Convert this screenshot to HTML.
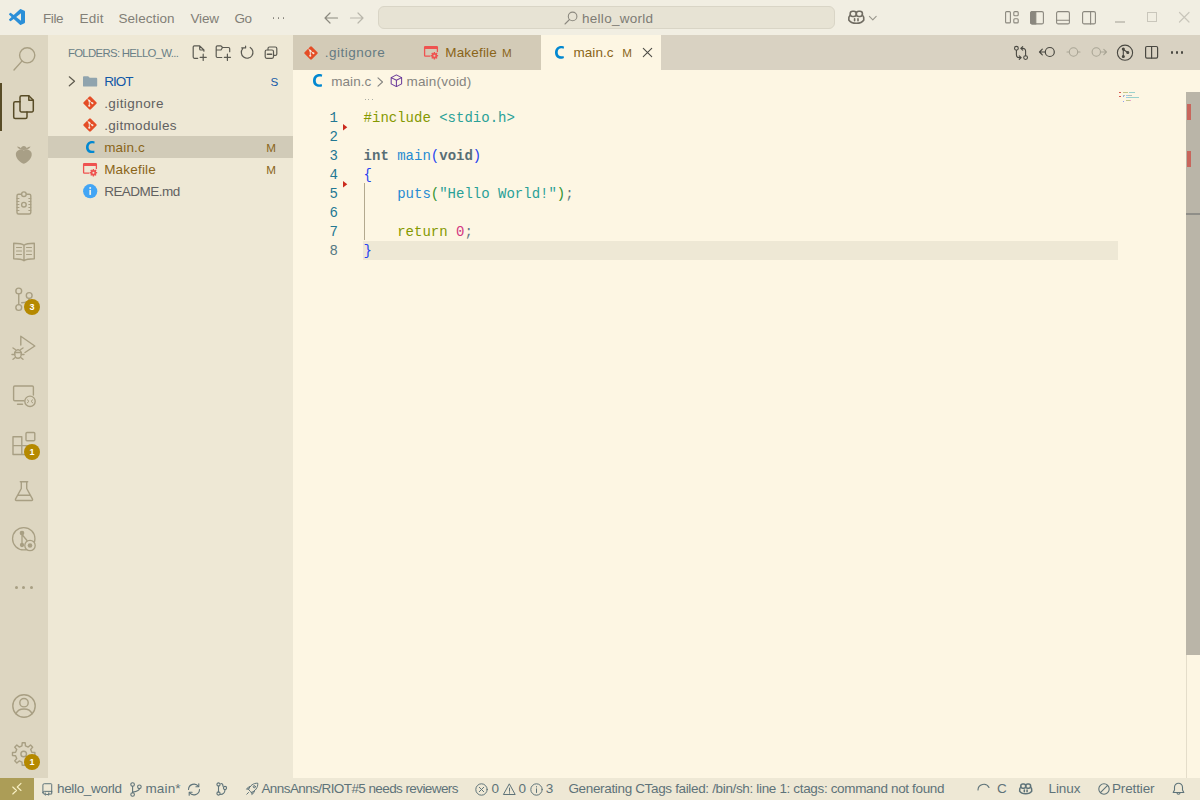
<!DOCTYPE html>
<html>
<head>
<meta charset="utf-8">
<style>
*{box-sizing:border-box;margin:0;padding:0}
html,body{width:1200px;height:800px;overflow:hidden;background:#FDF6E3}
body{font-family:"Liberation Sans",sans-serif;font-size:13px;color:#657B83;position:relative}
.abs{position:absolute}
.t{position:absolute;white-space:pre;line-height:1}
svg{position:absolute;overflow:visible}
.code{position:absolute;left:363.6px;white-space:pre;font-family:"Liberation Mono",monospace;font-size:14px;line-height:19px;height:19px;color:#657B83}
.ln{position:absolute;left:322px;width:16px;text-align:right;font-family:"Liberation Mono",monospace;font-size:14px;line-height:19px;height:19px;color:#237893}
.badge{position:absolute;width:16px;height:16px;border-radius:8px;background:#B58900;color:#fff;font-size:9px;font-weight:700;line-height:16px;text-align:center}
</style>
</head>
<body>
<div class="abs" style="left:0px;top:0px;width:1200px;height:35px;background:#F1EEE2;"></div>
<div class="abs" style="left:0px;top:35px;width:48px;height:743px;background:#DDD6C1;"></div>
<div class="abs" style="left:48px;top:35px;width:245px;height:743px;background:#EEE8D5;"></div>
<div class="abs" style="left:293px;top:35px;width:907px;height:35px;background:#D9D2C2;"></div>
<div class="abs" style="left:293px;top:35px;width:248px;height:35px;background:#D3CBB7;"></div>
<div class="abs" style="left:541px;top:35px;width:120px;height:35px;background:#FDF6E3;"></div>
<div class="abs" style="left:0px;top:778px;width:1200px;height:22px;background:#EEE8D5;"></div>
<div class="abs" style="left:0px;top:778px;width:34px;height:22px;background:#AC9D57;"></div>
<svg style="left:9px;top:9px" width="16" height="16" viewBox="0 0 24 24" fill="#2B8FD8" stroke="none" stroke-width="1" stroke-linecap="round" stroke-linejoin="round" ><path d="M23.15 2.587L18.21.21a1.494 1.494 0 0 0-1.705.29l-9.46 8.63-4.12-3.128a.999.999 0 0 0-1.276.057L.327 7.261A1 1 0 0 0 .326 8.74L3.899 12 .326 15.26a1 1 0 0 0 .001 1.479L1.65 17.94a.999.999 0 0 0 1.276.057l4.12-3.128 9.46 8.63a1.492 1.492 0 0 0 1.704.29l4.942-2.377A1.5 1.5 0 0 0 24 20.06V3.939a1.5 1.5 0 0 0-.85-1.352zm-5.146 14.861L10.826 12l7.178-5.448v10.896z"/></svg>
<div class="abs" style="left:272.7px;top:17.2px;width:1.6px;height:1.6px;background:#827F77;border-radius:1px"></div>
<div class="abs" style="left:277.7px;top:17.2px;width:1.6px;height:1.6px;background:#827F77;border-radius:1px"></div>
<div class="abs" style="left:282.7px;top:17.2px;width:1.6px;height:1.6px;background:#827F77;border-radius:1px"></div>
<svg style="left:324px;top:12px" width="14" height="12" viewBox="0 0 14 12" fill="none" stroke="#8C897F" stroke-width="1.2" stroke-linecap="round" stroke-linejoin="round" ><path d="M13.5 6H1M6 1L1 6l5 5"/></svg>
<svg style="left:350px;top:12px" width="14" height="12" viewBox="0 0 14 12" fill="none" stroke="#B9B6AB" stroke-width="1.2" stroke-linecap="round" stroke-linejoin="round" ><path d="M0.5 6H13M8 1l5 5-5 5"/></svg>
<div class="abs" style="left:378px;top:6px;width:457px;height:23px;background:#E7E3D4;border:1px solid #D9D5C6;border-radius:6px"></div>
<svg style="left:564px;top:10.5px" width="14" height="14" viewBox="0 0 14 14" fill="none" stroke="#8C897F" stroke-width="1.1" stroke-linecap="round" stroke-linejoin="round" ><circle cx="8.6" cy="5.4" r="4.3"/><path d="M5.5 8.5L1 13"/></svg>
<svg style="left:848px;top:10px" width="16.6" height="14.5" viewBox="0 0 16.600 14.500" fill="none" stroke="#716D63" stroke-width="1.6" stroke-linecap="round" stroke-linejoin="round" ><rect x="2.200" y="1.200" width="6.100" height="5.300" rx="2.400"/><rect x="8.300" y="1.200" width="6.100" height="5.300" rx="2.400"/><path d="M2.200 5C0.500 6.500 0.600 8 0.800 10C2 12 5 13.300 8.300 13.300C11.600 13.300 14.600 12 15.800 10C16 8 16.100 6.500 14.400 5"/><path d="M6.600 8.800V10.800M10 8.800V10.800"/></svg>
<svg style="left:868.5px;top:16px" width="8" height="4.5" viewBox="0 0 8 4.500" fill="none" stroke="#9A978D" stroke-width="1.1" stroke-linecap="round" stroke-linejoin="round" ><path d="M0.400 0.400L3.800 3.800L7.200 0.400"/></svg>
<svg style="left:1004.5px;top:11px" width="14" height="12.5" viewBox="0 0 14 12.500" fill="none" stroke="#8A877E" stroke-width="1.1" stroke-linecap="round" stroke-linejoin="round" ><rect x="0.600" y="0.600" width="4.800" height="11.300" rx="1"/><rect x="8.800" y="0.600" width="4.400" height="4.200" rx="1"/><rect x="8.800" y="7.700" width="4.400" height="4.200" rx="1"/></svg>
<svg style="left:1030.2px;top:10.5px" width="14" height="13.5" viewBox="0 0 14 13.500" fill="none" stroke="#8A877E" stroke-width="1.1" stroke-linecap="round" stroke-linejoin="round" ><rect x="0.600" y="0.600" width="12.800" height="12.300" rx="1.500"/><path d="M0.600 2.100a1.500 1.500 0 0 1 1.500-1.500H5.800V12.900H2.100a1.500 1.500 0 0 1-1.500-1.500z" fill="#8A877E"/></svg>
<svg style="left:1056px;top:10.5px" width="14" height="13.5" viewBox="0 0 14 13.500" fill="none" stroke="#8A877E" stroke-width="1.1" stroke-linecap="round" stroke-linejoin="round" ><rect x="0.600" y="0.600" width="12.800" height="12.300" rx="1.500"/><path d="M0.600 9.200H13.400"/></svg>
<svg style="left:1082px;top:10.5px" width="14" height="13.5" viewBox="0 0 14 13.500" fill="none" stroke="#8A877E" stroke-width="1.1" stroke-linecap="round" stroke-linejoin="round" ><rect x="0.600" y="0.600" width="12.800" height="12.300" rx="1.500"/><path d="M8.600 0.600V12.900"/></svg>
<div class="abs" style="left:1114.5px;top:21.4px;width:10.5px;height:1.2px;background:#C9C6BB;"></div>
<div class="abs" style="left:1147px;top:12.2px;width:10px;height:10px;background:transparent;border:1.200px solid #C9C6BB"></div>
<svg style="left:1178.5px;top:12.2px" width="10.5" height="10.5" viewBox="0 0 10.500 10.500" fill="none" stroke="#C9C6BB" stroke-width="1.2" stroke-linecap="round" stroke-linejoin="round" ><path d="M0.500 0.500l9.500 9.500M10 0.500L0.500 10"/></svg>
<div class="abs" style="left:0px;top:83px;width:2px;height:48px;background:#584C27;"></div>
<svg style="left:12px;top:46px" width="24" height="26" viewBox="12 46 24 26" fill="none" stroke="#A89F83" stroke-width="1.4" stroke-linecap="round" stroke-linejoin="round" ><circle cx="27.200" cy="55.300" r="7.600"/><path d="M21.900 61.100L14 70"/></svg>
<svg style="left:12px;top:94px" width="24" height="26" viewBox="12 94 24 26" fill="none" stroke="#584C27" stroke-width="1.5" stroke-linecap="round" stroke-linejoin="round" ><path d="M28.800 95.700H21.500a1.500 1.500 0 0 0-1.500 1.500V110.500a1.500 1.500 0 0 0 1.500 1.500H31.800a1.500 1.500 0 0 0 1.500-1.500V100.200z"/><path d="M28.800 95.700V100.200H33.300"/><path d="M20 101.700H15.200a1.500 1.500 0 0 0-1.500 1.500V117a1.500 1.500 0 0 0 1.500 1.500H25.500a1.500 1.500 0 0 0 1.500-1.500V112"/></svg>
<svg style="left:12px;top:143px" width="24" height="24" viewBox="12 143 24 24" fill="#A89F86" stroke="none" stroke-width="1" stroke-linecap="round" stroke-linejoin="round" ><path d="M23.800 150.500c-1.500-1.200-3-1.300-4.500-.800-2.600.9-4 3.300-3.300 6 .8 3.200 4 7 7.800 8 3.800-1 7-4.800 7.800-8 .7-2.700-.7-5.100-3.300-6-1.500-.5-3-.4-4.500.8z" stroke="none"/><path d="M17 146.500c1 2.200 3.300 3.300 6.800 3.500 3.500-.2 5.800-1.300 6.800-3.500-1.800.2-3 .8-3.800 1.700-.4-1.200-1.400-2-3-2.200-1.600.2-2.600 1-3 2.200-.8-.9-2-1.500-3.800-1.700z" stroke="none"/></svg>
<svg style="left:12px;top:190px" width="24" height="26" viewBox="12 190 24 26" fill="none" stroke="#A89F83" stroke-width="1.4" stroke-linecap="round" stroke-linejoin="round" ><rect x="17" y="194.200" width="13.800" height="19.800" rx="1.500"/><circle cx="23.900" cy="194.200" r="2.300" fill="#DDD6C1"/><circle cx="23.900" cy="204.700" r="2.300"/><path d="M17 198.500h2M17 201.500h2M17 204.500h2M17 207.500h2M17 210.500h2M28.800 198.500h2M28.800 201.500h2M28.800 204.500h2M28.800 207.500h2M28.800 210.500h2" stroke-width="1"/></svg>
<svg style="left:12px;top:240px" width="24" height="22" viewBox="12 240 24 22" fill="none" stroke="#A89F83" stroke-width="1.4" stroke-linecap="round" stroke-linejoin="round" ><path d="M24 245.200c-1.500-1.300-4-2-10.300-2v15.600c6.300 0 8.800.7 10.300 2 1.500-1.300 4-2 10.300-2V243.200c-6.300 0-8.800.7-10.300 2zM24 245.200V260.800"/><path d="M16.500 247.500h5M16.500 251h5M16.500 254.500h5M26.500 247.500h5M26.500 251h5M26.500 254.500h5" stroke-width="1.100"/></svg>
<svg style="left:12px;top:286px" width="24" height="26" viewBox="12 286 24 26" fill="none" stroke="#A89F83" stroke-width="1.4" stroke-linecap="round" stroke-linejoin="round" ><circle cx="18.750" cy="291" r="2.900"/><circle cx="18.750" cy="307.500" r="2.900"/><circle cx="29.200" cy="295.500" r="2.900"/><path d="M18.750 294V304.500M29.200 298.500c0 3-2.500 4.200-7.500 4.200"/></svg>
<div class="badge" style="left:24px;top:299px">3</div>
<svg style="left:10px;top:334px" width="28" height="28" viewBox="10 334 28 28" fill="none" stroke="#A89F83" stroke-width="1.4" stroke-linecap="round" stroke-linejoin="round" ><path d="M20.800 345V336.200L34.800 346 25 352.500"/><ellipse cx="18" cy="354" rx="3.300" ry="4.300"/><path d="M14.700 352.500h6.600M15.300 349.500l-2.300-1.500M20.700 349.500l2.300-1.500M14.700 354.500H12M21.300 354.500H24M15.300 357.500L13 359.300M20.700 357.500L23 359.300"/></svg>
<svg style="left:12px;top:384px" width="26" height="24" viewBox="12 384 26 24" fill="none" stroke="#A89F83" stroke-width="1.4" stroke-linecap="round" stroke-linejoin="round" ><path d="M24 400.800H14.800a1.200 1.200 0 0 1-1.200-1.200V387.200a1.200 1.200 0 0 1 1.200-1.200H32.200a1.200 1.200 0 0 1 1.200 1.200V395"/><path d="M17.500 404.300H22.500"/><circle cx="30" cy="401.300" r="5.200"/><path d="M27.300 399.800l1.700 1.500-1.700 1.500M32.700 399.800L31 401.300l1.700 1.500" stroke-width="1"/></svg>
<svg style="left:12px;top:431px" width="24" height="26" viewBox="12 431 24 26" fill="none" stroke="#A89F83" stroke-width="1.4" stroke-linecap="round" stroke-linejoin="round" ><path d="M13 436.800H21.800V454.500H13zM13 445.600H21.800M21.800 445.600H30.700V454.500H21.800"/><rect x="26" y="432.500" width="8.800" height="8.200" rx="1"/></svg>
<div class="badge" style="left:24px;top:443.700px">1</div>
<svg style="left:12px;top:480px" width="24" height="22" viewBox="12 480 24 22" fill="none" stroke="#A89F83" stroke-width="1.4" stroke-linecap="round" stroke-linejoin="round" ><path d="M20.300 481.700H27.700M21.300 481.700V488.500L15.500 499.200a.9.900 0 0 0 .8 1.300H31.700a.9.900 0 0 0 .8-1.300L26.700 488.500V481.700M18 495.300H30"/></svg>
<svg style="left:12px;top:527px" width="24" height="24" viewBox="12 527 24 24" fill="none" stroke="#A89F83" stroke-width="1.3" stroke-linecap="round" stroke-linejoin="round" ><circle cx="23.750" cy="538.750" r="11.200"/><circle cx="30" cy="545.500" r="5.200" fill="#DDD6C1"/><circle cx="30" cy="545.500" r="2.300" fill="#A89F83" stroke="none"/><circle cx="22" cy="533" r="1.700" fill="#A89F83"/><circle cx="22" cy="545" r="1.500" fill="#A89F83"/><path d="M22 533V545M22 534.500L27 540.500"/></svg>
<div class="abs" style="left:14.85px;top:586.1px;width:2.8px;height:2.8px;background:#A89F83;border-radius:2px"></div>
<div class="abs" style="left:22.35px;top:586.1px;width:2.8px;height:2.8px;background:#A89F83;border-radius:2px"></div>
<div class="abs" style="left:29.85px;top:586.1px;width:2.8px;height:2.8px;background:#A89F83;border-radius:2px"></div>
<svg style="left:12px;top:694px" width="24" height="24" viewBox="12 694 24 24" fill="none" stroke="#A89F83" stroke-width="1.4" stroke-linecap="round" stroke-linejoin="round" ><circle cx="24" cy="706" r="11.200"/><circle cx="24" cy="702.700" r="4.200"/><path d="M16 713.800c1.200-3.300 4-4.800 8-4.800s6.800 1.500 8 4.800"/></svg>
<svg style="left:12px;top:742px" width="24" height="24" viewBox="12 742 24 24" fill="none" stroke="#A89F83" stroke-width="1.4" stroke-linecap="round" stroke-linejoin="round" ><path d="M31.81 752.25L34.90 752.50L34.90 755.50L31.81 755.75L30.67 758.50L32.68 760.86L30.56 762.98L28.20 760.97L25.45 762.11L25.20 765.20L22.20 765.20L21.95 762.11L19.20 760.97L16.84 762.98L14.72 760.86L16.73 758.50L15.59 755.75L12.50 755.50L12.50 752.50L15.59 752.25L16.73 749.50L14.72 747.14L16.84 745.02L19.20 747.03L21.95 745.89L22.20 742.80L25.20 742.80L25.45 745.89L28.20 747.03L30.56 745.02L32.68 747.14L30.67 749.50Z"/><circle cx="23.700" cy="754" r="2.800"/></svg>
<div class="badge" style="left:24px;top:753.800px">1</div>
<svg style="left:192px;top:45px" width="16" height="16" viewBox="192 45 16 16" fill="none" stroke="#5B5A52" stroke-width="1.2" stroke-linecap="round" stroke-linejoin="round" ><path d="M197.700 58.300H194.400a1.200 1.200 0 0 1-1.200-1.200V47a1.200 1.200 0 0 1 1.200-1.200H199.700L203.900 50V51.200M199.700 45.800V49a1 1 0 0 0 1 1H203.900"/><path d="M203.200 54.200V60.400M200.100 57.300H206.300"/></svg>
<svg style="left:215px;top:45px" width="18" height="16" viewBox="215 45 18 16" fill="none" stroke="#5B5A52" stroke-width="1.2" stroke-linecap="round" stroke-linejoin="round" ><path d="M221.800 57.500H217.400a1.200 1.200 0 0 1-1.200-1.200V47a1.200 1.200 0 0 1 1.200-1.200H221L222.500 47.500H228.500a1.200 1.200 0 0 1 1.200 1.200V51.700M216.200 50H221L222.500 47.500"/><path d="M227.400 54.200V60.400M224.300 57.300H230.500"/></svg>
<svg style="left:239px;top:45px" width="16" height="16" viewBox="239 45 16 16" fill="none" stroke="#5B5A52" stroke-width="1.2" stroke-linecap="round" stroke-linejoin="round" ><path d="M250.200 47.500A5.800 5.800 0 1 1 242.700 48.700M241.700 47.900H245.600V46.200"/></svg>
<svg style="left:263px;top:45px" width="16" height="16" viewBox="263 45 16 16" fill="none" stroke="#5B5A52" stroke-width="1.2" stroke-linecap="round" stroke-linejoin="round" ><rect x="265.200" y="50" width="8.300" height="8.300" rx="1.500"/><path d="M268 49.800V48.500a1.500 1.500 0 0 1 1.500-1.500H275.300a1.500 1.500 0 0 1 1.500 1.500V53.900a1.500 1.500 0 0 1-1.500 1.500H273.700"/><path d="M267.400 54.200H271.600" stroke-width="1.500"/></svg>
<div class="abs" style="left:48px;top:136px;width:245px;height:22px;background:#D1CBB8;"></div>
<svg style="left:68px;top:76px" width="8" height="11" viewBox="68 76 8 11" fill="none" stroke="#5E5A4E" stroke-width="1.2" stroke-linecap="round" stroke-linejoin="round" ><path d="M69.300 76.800L74.500 81.300L69.300 85.800"/></svg>
<svg style="left:82px;top:76px" width="16" height="11" viewBox="82 76 16 11" fill="#90A4AE" stroke="none" stroke-width="1" stroke-linecap="round" stroke-linejoin="round" ><path d="M83 77.200a.9.900 0 0 1 .9-.9H88.200L89.700 77.800H96.300a.9.900 0 0 1 .9.900V85.700a.9.900 0 0 1-.9.900H83.900a.9.900 0 0 1-.9-.9z"/></svg>
<svg style="left:82px;top:95px" width="16" height="16" viewBox="-8 -8 16 16" fill="none" stroke="none" stroke-width="1" stroke-linecap="round" stroke-linejoin="round" ><rect x="-5.100" y="-5.100" width="10.200" height="10.200" rx="1.200" transform="rotate(45)" fill="#E44D26"/><circle cx="-0.700" cy="-2.200" r="1.050" fill="#F6E8DC"/><circle cx="-0.700" cy="2.700" r="1.050" fill="#F6E8DC"/><circle cx="2.400" cy="0.200" r="1.050" fill="#F6E8DC"/><path d="M-0.700 -2.200V2.700M-0.700 -2.200L2.400 0.200M-2.500 -4.200L-0.700 -2.200" stroke="#F6E8DC" stroke-width="0.900" fill="none"/></svg>
<svg style="left:82px;top:117px" width="16" height="16" viewBox="-8 -8 16 16" fill="none" stroke="none" stroke-width="1" stroke-linecap="round" stroke-linejoin="round" ><rect x="-5.100" y="-5.100" width="10.200" height="10.200" rx="1.200" transform="rotate(45)" fill="#E44D26"/><circle cx="-0.700" cy="-2.200" r="1.050" fill="#F6E8DC"/><circle cx="-0.700" cy="2.700" r="1.050" fill="#F6E8DC"/><circle cx="2.400" cy="0.200" r="1.050" fill="#F6E8DC"/><path d="M-0.700 -2.200V2.700M-0.700 -2.200L2.400 0.200M-2.500 -4.200L-0.700 -2.200" stroke="#F6E8DC" stroke-width="0.900" fill="none"/></svg>
<svg style="left:85.50px;top:141.35px" width="8.75" height="12.10" viewBox="5.970 5 10.120 14"><path fill="#0288D1" d="M15.450 15.970l.42 2.440c-.26.140-.68.270-1.240.390-.57.130-1.240.2-2.010.2-2.210-.04-3.870-.7-4.980-1.960-1.120-1.270-1.670-2.880-1.670-4.820.05-2.310.72-4.080 2.010-5.320C9.300 5.650 10.940 5 12.940 5c.76 0 1.410.07 1.950.19.540.12.940.25 1.200.4l-.6 2.490-1.040-.34c-.4-.1-.87-.15-1.400-.15-1.170-.01-2.140.36-2.900 1.100-.77.730-1.170 1.850-1.200 3.340 0 1.360.37 2.420 1.080 3.200.71.770 1.710 1.170 2.990 1.180l1.330-.12c.43-.08.79-.19 1.100-.32z"/></svg>
<svg style="left:82.8px;top:163px" width="15" height="14" viewBox="0 0 15 14" fill="none" stroke="none" stroke-width="1" stroke-linecap="round" stroke-linejoin="round" ><path d="M5.800 10.200H1.300a.7.700 0 0 1-.7-.7V1.300a.7.700 0 0 1 .7-.7H12.700a.7.700 0 0 1 .7.700V5.500" fill="none" stroke="#EF5350" stroke-width="1.300"/><path d="M0.600 1.300a.7.700 0 0 1 .7-.7H12.700a.7.700 0 0 1 .7.700V2.900H0.600z" fill="#EF5350"/><path d="M13.20 8.93L14.14 9.05L14.14 10.35L13.20 10.47L12.92 11.14L13.51 11.89L12.59 12.81L11.84 12.22L11.17 12.50L11.05 13.44L9.75 13.44L9.63 12.50L8.96 12.22L8.21 12.81L7.29 11.89L7.88 11.14L7.60 10.47L6.66 10.35L6.66 9.05L7.60 8.93L7.88 8.26L7.29 7.51L8.21 6.59L8.96 7.18L9.63 6.90L9.75 5.96L11.05 5.96L11.17 6.90L11.84 7.18L12.59 6.59L13.51 7.51L12.92 8.26ZM9.40 9.70a1.0 1.0 0 1 0 2.0 0a1.0 1.0 0 1 0 -2.0 0Z" fill="#EF5350" fill-rule="evenodd"/></svg>
<svg style="left:82.8px;top:184.3px" width="14.4" height="14.4" viewBox="-7.200 -7.200 14.400 14.400" fill="none" stroke="none" stroke-width="1" stroke-linecap="round" stroke-linejoin="round" ><circle r="7.100" fill="#42A5F5"/><rect x="-0.850" y="-1.300" width="1.700" height="5" fill="#F4F1E6"/><circle cy="-3.300" r="1" fill="#F4F1E6"/></svg>
<svg style="left:303.2px;top:44.8px" width="16" height="16" viewBox="-8 -8 16 16" fill="none" stroke="none" stroke-width="1" stroke-linecap="round" stroke-linejoin="round" ><rect x="-5.100" y="-5.100" width="10.200" height="10.200" rx="1.200" transform="rotate(45)" fill="#E44D26"/><circle cx="-0.700" cy="-2.200" r="1.050" fill="#F6E8DC"/><circle cx="-0.700" cy="2.700" r="1.050" fill="#F6E8DC"/><circle cx="2.400" cy="0.200" r="1.050" fill="#F6E8DC"/><path d="M-0.700 -2.200V2.700M-0.700 -2.200L2.400 0.200M-2.500 -4.200L-0.700 -2.200" stroke="#F6E8DC" stroke-width="0.900" fill="none"/></svg>
<svg style="left:424px;top:46px" width="15" height="14" viewBox="0 0 15 14" fill="none" stroke="none" stroke-width="1" stroke-linecap="round" stroke-linejoin="round" ><path d="M5.800 10.200H1.300a.7.700 0 0 1-.7-.7V1.300a.7.700 0 0 1 .7-.7H12.700a.7.700 0 0 1 .7.700V5.500" fill="none" stroke="#EF5350" stroke-width="1.300"/><path d="M0.600 1.300a.7.700 0 0 1 .7-.7H12.700a.7.700 0 0 1 .7.700V2.900H0.600z" fill="#EF5350"/><path d="M13.20 8.93L14.14 9.05L14.14 10.35L13.20 10.47L12.92 11.14L13.51 11.89L12.59 12.81L11.84 12.22L11.17 12.50L11.05 13.44L9.75 13.44L9.63 12.50L8.96 12.22L8.21 12.81L7.29 11.89L7.88 11.14L7.60 10.47L6.66 10.35L6.66 9.05L7.60 8.93L7.88 8.26L7.29 7.51L8.21 6.59L8.96 7.18L9.63 6.90L9.75 5.96L11.05 5.96L11.17 6.90L11.84 7.18L12.59 6.59L13.51 7.51L12.92 8.26ZM9.40 9.70a1.0 1.0 0 1 0 2.0 0a1.0 1.0 0 1 0 -2.0 0Z" fill="#EF5350" fill-rule="evenodd"/></svg>
<svg style="left:554.60px;top:45.67px" width="9.15" height="12.66" viewBox="5.970 5 10.120 14"><path fill="#0288D1" d="M15.450 15.970l.42 2.440c-.26.140-.68.270-1.240.390-.57.130-1.240.2-2.010.2-2.210-.04-3.870-.7-4.980-1.960-1.120-1.270-1.670-2.880-1.670-4.820.05-2.310.72-4.080 2.010-5.320C9.300 5.650 10.940 5 12.940 5c.76 0 1.410.07 1.950.19.540.12.940.25 1.200.4l-.6 2.490-1.040-.34c-.4-.1-.87-.15-1.400-.15-1.170-.01-2.140.36-2.900 1.100-.77.730-1.170 1.850-1.200 3.340 0 1.360.37 2.420 1.080 3.200.71.770 1.710 1.170 2.990 1.180l1.330-.12c.43-.08.79-.19 1.100-.32z"/></svg>
<svg style="left:642.5px;top:48.2px" width="9" height="9" viewBox="0 0 9 9" fill="none" stroke="#4E4D47" stroke-width="1.1" stroke-linecap="round" stroke-linejoin="round" ><path d="M0.300 0.300L8.700 8.700M8.700 0.300L0.300 8.700"/></svg>
<svg style="left:1013px;top:45px" width="16" height="16" viewBox="1013 45 16 16" fill="none" stroke="#4A4942" stroke-width="1.1" stroke-linecap="round" stroke-linejoin="round" ><circle cx="1016.400" cy="48.300" r="1.900"/><circle cx="1025.600" cy="57.600" r="1.900"/><path d="M1016.400 50.200V55a2.600 2.600 0 0 0 2.600 2.600H1021M1019.300 55.800l1.900 1.800-1.900 1.800M1025.600 55.700V51a2.600 2.600 0 0 0-2.600-2.600H1021M1022.700 46.600l-1.900 1.800 1.900 1.800"/></svg>
<svg style="left:1038px;top:45px" width="18" height="16" viewBox="1038 45 18 16" fill="none" stroke="#4A4942" stroke-width="1.2" stroke-linecap="round" stroke-linejoin="round" ><circle cx="1049.800" cy="52" r="4.500"/><path d="M1045.300 52H1039.500M1042.300 49.200L1039.500 52l2.800 2.800"/></svg>
<svg style="left:1065px;top:45px" width="18" height="16" viewBox="1065 45 18 16" fill="none" stroke="#A9A595" stroke-width="1.1" stroke-linecap="round" stroke-linejoin="round" ><circle cx="1073.500" cy="52" r="4.200"/><path d="M1067 52H1069.300M1077.700 52H1080"/></svg>
<svg style="left:1090px;top:45px" width="18" height="16" viewBox="1090 45 18 16" fill="none" stroke="#A9A595" stroke-width="1.1" stroke-linecap="round" stroke-linejoin="round" ><circle cx="1096.300" cy="52" r="4.200"/><path d="M1100.500 52H1106.500M1103.800 49.300l2.700 2.700-2.700 2.700"/></svg>
<svg style="left:1116px;top:44px" width="18" height="18" viewBox="1116 44 18 18" fill="none" stroke="#4A4942" stroke-width="1.1" stroke-linecap="round" stroke-linejoin="round" ><circle cx="1125" cy="52.700" r="7.600"/><circle cx="1123.300" cy="49" r="1" fill="#4A4942"/><circle cx="1123.300" cy="56.500" r="1" fill="#4A4942"/><circle cx="1127.800" cy="52.500" r="1" fill="#4A4942"/><path d="M1123.300 49V56.500M1123.300 49.500L1127.800 52.500"/></svg>
<svg style="left:1144px;top:45px" width="16" height="16" viewBox="1144 45 16 16" fill="none" stroke="#4A4942" stroke-width="1.2" stroke-linecap="round" stroke-linejoin="round" ><rect x="1145.600" y="46.500" width="12" height="11.600" rx="1.300"/><path d="M1151.600 46.500V58.100"/></svg>
<div class="abs" style="left:1170.9px;top:51.4px;width:2.2px;height:2.2px;background:#4A4942;border-radius:2px"></div>
<div class="abs" style="left:1175.9px;top:51.4px;width:2.2px;height:2.2px;background:#4A4942;border-radius:2px"></div>
<div class="abs" style="left:1180.9px;top:51.4px;width:2.2px;height:2.2px;background:#4A4942;border-radius:2px"></div>
<svg style="left:313.20px;top:74.37px" width="9.30" height="12.87" viewBox="5.970 5 10.120 14"><path fill="#0288D1" d="M15.450 15.970l.42 2.440c-.26.140-.68.270-1.240.390-.57.130-1.240.2-2.010.2-2.210-.04-3.870-.7-4.980-1.960-1.120-1.270-1.670-2.880-1.670-4.820.05-2.310.72-4.080 2.010-5.320C9.300 5.650 10.940 5 12.940 5c.76 0 1.410.07 1.950.19.540.12.940.25 1.200.4l-.6 2.490-1.040-.34c-.4-.1-.87-.15-1.400-.15-1.170-.01-2.140.36-2.900 1.100-.77.730-1.170 1.850-1.200 3.340 0 1.360.37 2.420 1.080 3.200.71.770 1.710 1.170 2.990 1.180l1.330-.12c.43-.08.79-.19 1.100-.32z"/></svg>
<svg style="left:376.5px;top:77px" width="7" height="10" viewBox="0 0 7 10" fill="none" stroke="#858480" stroke-width="1.1" stroke-linecap="round" stroke-linejoin="round" ><path d="M1 0.800L5.500 5L1 9.200"/></svg>
<svg style="left:389.5px;top:73.5px" width="12.8" height="13.5" viewBox="0 0 14 15" fill="none" stroke="#6A3A9A" stroke-width="1.15" stroke-linecap="round" stroke-linejoin="round" ><path d="M7 1L12.800 4V11L7 14L1.200 11V4zM1.200 4L7 7L12.800 4M7 7V14"/></svg>
<div class="abs" style="left:363px;top:241px;width:755px;height:19px;background:#EEE8D5;"></div>
<div class="abs" style="left:364.65000000000003px;top:99.1px;width:1.3px;height:1.3px;background:#A9ACA4;"></div>
<div class="abs" style="left:368.15000000000003px;top:99.1px;width:1.3px;height:1.3px;background:#A9ACA4;"></div>
<div class="abs" style="left:371.65000000000003px;top:99.1px;width:1.3px;height:1.3px;background:#A9ACA4;"></div>
<div class="abs" style="left:363.5px;top:183px;width:1px;height:57px;background:#B3A98F;"></div>
<div class="ln" style="top:108.90px;">1</div>
<div class="code" style="top:108.90px"><span style="color:#859900">#include</span> <span style="color:#2AA198">&lt;stdio.h&gt;</span></div>
<div class="ln" style="top:127.90px;">2</div>
<div class="ln" style="top:146.90px;">3</div>
<div class="code" style="top:146.90px"><span style="color:#586E75;font-weight:700">int</span> <span style="color:#268BD2">main</span><span style="color:#2443F0">(</span><span style="color:#586E75;font-weight:700">void</span><span style="color:#2443F0">)</span></div>
<div class="ln" style="top:165.90px;">4</div>
<div class="code" style="top:165.90px"><span style="color:#2443F0">{</span></div>
<div class="ln" style="top:184.90px;">5</div>
<div class="code" style="top:184.90px">    <span style="color:#268BD2">puts</span><span style="color:#319331">(</span><span style="color:#2AA198">"Hello World!"</span><span style="color:#319331">)</span>;</div>
<div class="ln" style="top:203.90px;">6</div>
<div class="ln" style="top:222.90px;">7</div>
<div class="code" style="top:222.90px">    <span style="color:#859900">return</span> <span style="color:#D33682">0</span>;</div>
<div class="ln" style="top:241.90px;color:#567983">8</div>
<div class="code" style="top:241.90px"><span style="color:#2443F0">}</span></div>
<svg style="left:342.5px;top:124.39999999999999px" width="4.3" height="6.4" viewBox="0 0 4.300 6.400" fill="#CB2A1D" stroke="none" stroke-width="1" stroke-linecap="round" stroke-linejoin="round" ><path d="M0 0L4.300 3.200L0 6.400z"/></svg>
<svg style="left:342.5px;top:181.4px" width="4.3" height="6.4" viewBox="0 0 4.300 6.400" fill="#CB2A1D" stroke="none" stroke-width="1" stroke-linecap="round" stroke-linejoin="round" ><path d="M0 0L4.300 3.200L0 6.400z"/></svg>
<div class="abs" style="left:1123.0px;top:92.0px;width:5.36px;height:1px;background:#C3C68A;"></div>
<div class="abs" style="left:1129.03px;top:92.0px;width:6.03px;height:1px;background:#9AD2CC;"></div>
<div class="abs" style="left:1123.0px;top:94.6px;width:2.01px;height:1px;background:#B4BDBD;"></div>
<div class="abs" style="left:1125.68px;top:94.6px;width:2.68px;height:1px;background:#9CCAEA;"></div>
<div class="abs" style="left:1128.36px;top:94.6px;width:4.02px;height:1px;background:#B4BDBD;"></div>
<div class="abs" style="left:1123.0px;top:95.9px;width:0.67px;height:1px;background:#8E9EF2;"></div>
<div class="abs" style="left:1125.68px;top:97.2px;width:2.68px;height:1px;background:#9CCAEA;"></div>
<div class="abs" style="left:1128.36px;top:97.2px;width:10.72px;height:1px;background:#9AD2CC;"></div>
<div class="abs" style="left:1125.68px;top:99.8px;width:4.02px;height:1px;background:#C3C68A;"></div>
<div class="abs" style="left:1130.37px;top:99.8px;width:0.67px;height:1px;background:#EBA6C8;"></div>
<div class="abs" style="left:1123.0px;top:101.1px;width:0.67px;height:1px;background:#8E9EF2;"></div>
<div class="abs" style="left:1119px;top:92.3px;width:2.2px;height:1.2px;background:#D65A50;"></div>
<div class="abs" style="left:1119px;top:96px;width:2.2px;height:1.2px;background:#D65A50;"></div>
<div class="abs" style="left:1186px;top:92px;width:14px;height:563px;background:#BAB5A8;"></div>
<div class="abs" style="left:1186px;top:655px;width:1px;height:123px;background:#E4DDCA;"></div>
<div class="abs" style="left:1186.5px;top:104px;width:4.5px;height:16px;background:#C8665C;"></div>
<div class="abs" style="left:1186.5px;top:151px;width:4.5px;height:16px;background:#C8665C;"></div>
<div class="abs" style="left:1186px;top:213px;width:14px;height:1.5px;background:#8F8E88;"></div>
<svg style="left:10px;top:780px" width="14" height="16" viewBox="10 780 14 16" fill="none" stroke="#F8F0C4" stroke-width="1.1" stroke-linecap="round" stroke-linejoin="round" ><path d="M12.750 787L16.500 790.500L12.750 794M21 783.300L17.250 787L21 790.500"/></svg>
<svg style="left:41.7px;top:783px" width="10.8" height="12.6" viewBox="0 0 12 14" fill="none" stroke="#5E7379" stroke-width="1.1" stroke-linecap="round" stroke-linejoin="round" ><path d="M10.800 10.200V1.600a.8.800 0 0 0-.8-.8H2.500A1.500 1.500 0 0 0 1 2.300V10.800M1 10.800a1.500 1.500 0 0 1 1.500-1.500H10.800M1 10.800A1.500 1.500 0 0 0 2.500 12.300H3.500M10.800 9.300V12.300H7.500M3.500 11V13.500L5.500 12.500L7.500 13.500V11"/></svg>
<svg style="left:129.5px;top:781.5px" width="12" height="15" viewBox="0 0 12 15" fill="none" stroke="#5E7379" stroke-width="1.1" stroke-linecap="round" stroke-linejoin="round" ><circle cx="2.600" cy="2.500" r="1.800"/><circle cx="2.600" cy="12.500" r="1.800"/><circle cx="9.400" cy="4.800" r="1.800"/><path d="M2.600 4.300V10.700M9.400 6.600c0 2.200-2.500 3-6.500 3.500"/></svg>
<svg style="left:186.5px;top:782.5px" width="14" height="13" viewBox="0 0 14 13" fill="none" stroke="#5E7379" stroke-width="1.1" stroke-linecap="round" stroke-linejoin="round" ><path d="M1.500 6.500A5.500 5.500 0 0 1 11.500 3.500M12.500 6.500A5.500 5.500 0 0 1 2.500 9.500"/><path d="M11.800 0.800V3.700H8.900M2.200 12.200V9.300H5.100"/></svg>
<svg style="left:214.5px;top:782px" width="13" height="14" viewBox="0 0 13 14" fill="none" stroke="#5E7379" stroke-width="1.1" stroke-linecap="round" stroke-linejoin="round" ><circle cx="3.500" cy="2.500" r="1.600"/><circle cx="3.500" cy="11.500" r="1.600"/><circle cx="10" cy="6" r="1.600"/><path d="M3.500 4.100V9.900M6 1.500C7.500 1.500 8 3 8 4.200M5.500 12.500C8 12.500 10 10.500 10 7.600"/></svg>
<svg style="left:244.5px;top:782px" width="14" height="14" viewBox="0 0 14 14" fill="none" stroke="#5E7379" stroke-width="1" stroke-linecap="round" stroke-linejoin="round" ><path d="M5 9L3.500 7.500C5 3.500 8.500 1 12.800 1.200 13 5.500 10.500 9 6.500 10.500zM4 7L1.500 7.200 3.500 5 5.500 4.500M7 10L6.800 12.500 9 10.500 9.500 8.500M3.500 10.500L1.800 12.200"/><circle cx="9.300" cy="4.700" r="1.100"/></svg>
<svg style="left:475px;top:782.5px" width="13" height="13" viewBox="0 0 13 13" fill="none" stroke="#5E7379" stroke-width="1" stroke-linecap="round" stroke-linejoin="round" ><circle cx="6.500" cy="6.500" r="5.700"/><path d="M4.300 4.300L8.700 8.700M8.700 4.300L4.300 8.700"/></svg>
<svg style="left:502.5px;top:782.5px" width="13" height="13" viewBox="0 0 13 13" fill="none" stroke="#5E7379" stroke-width="1" stroke-linecap="round" stroke-linejoin="round" ><path d="M6.500 1.200L12.200 11.500H0.800zM6.500 5V8.300M6.500 9.700V10.200"/></svg>
<svg style="left:529.5px;top:782.5px" width="13" height="13" viewBox="0 0 13 13" fill="none" stroke="#5E7379" stroke-width="1" stroke-linecap="round" stroke-linejoin="round" ><circle cx="6.500" cy="6.500" r="5.700"/><path d="M6.500 5.800V9.500M6.500 3.600V4"/></svg>
<svg style="left:977px;top:783px" width="13" height="8" viewBox="0 0 13 8" fill="none" stroke="#5E7379" stroke-width="1.1" stroke-linecap="round" stroke-linejoin="round" ><path d="M1 7A5.800 5.800 0 0 1 12 4.500"/></svg>
<svg style="left:1019.3px;top:782.8px" width="13.4" height="11.7" viewBox="0 0 16.600 14.500" fill="none" stroke="#5E7379" stroke-width="1.9" stroke-linecap="round" stroke-linejoin="round" ><rect x="2.200" y="1.200" width="6.100" height="5.300" rx="2.400"/><rect x="8.300" y="1.200" width="6.100" height="5.300" rx="2.400"/><path d="M2.200 5C0.500 6.500 0.600 8 0.800 10C2 12 5 13.300 8.300 13.300C11.600 13.300 14.600 12 15.800 10C16 8 16.100 6.500 14.400 5"/><path d="M6.600 8.800V10.800M10 8.800V10.800"/></svg>
<svg style="left:1097.5px;top:783px" width="12" height="12" viewBox="0 0 12 12" fill="none" stroke="#5E7379" stroke-width="1.1" stroke-linecap="round" stroke-linejoin="round" ><circle cx="6" cy="6" r="5.200"/><path d="M2.400 9.600L9.600 2.400"/></svg>
<svg style="left:1171.5px;top:782px" width="13" height="14" viewBox="0 0 13 14" fill="none" stroke="#5E7379" stroke-width="1.1" stroke-linecap="round" stroke-linejoin="round" ><path d="M6.500 1.200A4 4 0 0 0 2.500 5.200V8L1.200 10.500H11.800L10.500 8V5.200A4 4 0 0 0 6.500 1.200zM5 10.700A1.500 1.500 0 0 0 8 10.700"/></svg>
<div class="t" style="left:42.96px;top:12.15px;font-size:13.5px;color:#827F77;font-weight:400;letter-spacing:-0.395px;font-family:'Liberation Sans';">File</div>
<div class="t" style="left:79.46px;top:12.15px;font-size:13.5px;color:#827F77;font-weight:400;letter-spacing:0.271px;font-family:'Liberation Sans';">Edit</div>
<div class="t" style="left:118.46px;top:12.15px;font-size:13.5px;color:#827F77;font-weight:400;letter-spacing:0.067px;font-family:'Liberation Sans';">Selection</div>
<div class="t" style="left:190.46px;top:12.15px;font-size:13.5px;color:#827F77;font-weight:400;letter-spacing:-0.150px;font-family:'Liberation Sans';">View</div>
<div class="t" style="left:234.46px;top:12.15px;font-size:13.5px;color:#827F77;font-weight:400;letter-spacing:-0.436px;font-family:'Liberation Sans';">Go</div>
<div class="t" style="left:582.06px;top:12.05px;font-size:13.5px;color:#7E7C74;font-weight:400;letter-spacing:0.268px;font-family:'Liberation Sans';">hello_world</div>
<div class="t" style="left:67.94px;top:47.69px;font-size:11.42px;color:#6A7F86;font-weight:400;letter-spacing:-0.705px;font-family:'Liberation Sans';">FOLDERS: HELLO_W...</div>
<div class="t" style="left:104.16px;top:75.15px;font-size:13.5px;color:#1258A7;font-weight:400;letter-spacing:-0.957px;font-family:'Liberation Sans';">RIOT</div>
<div class="t" style="left:270.53px;top:76.19px;font-size:11.63px;color:#1258A7;font-weight:400;letter-spacing:-1.035px;font-family:'Liberation Sans';">S</div>
<div class="t" style="left:104.16px;top:97.15px;font-size:13.5px;color:#616161;font-weight:400;letter-spacing:0.426px;font-family:'Liberation Sans';">.gitignore</div>
<div class="t" style="left:104.16px;top:119.15px;font-size:13.5px;color:#616161;font-weight:400;letter-spacing:0.333px;font-family:'Liberation Sans';">.gitmodules</div>
<div class="t" style="left:104.16px;top:141.15px;font-size:13.5px;color:#8A6519;font-weight:400;letter-spacing:0.173px;font-family:'Liberation Sans';">main.c</div>
<div class="t" style="left:266.28px;top:142.19px;font-size:11.63px;color:#8A6519;font-weight:400;letter-spacing:0.993px;font-family:'Liberation Sans';">M</div>
<div class="t" style="left:104.16px;top:163.15px;font-size:13.5px;color:#8A6519;font-weight:400;letter-spacing:0.200px;font-family:'Liberation Sans';">Makefile</div>
<div class="t" style="left:266.28px;top:164.19px;font-size:11.63px;color:#8A6519;font-weight:400;letter-spacing:0.993px;font-family:'Liberation Sans';">M</div>
<div class="t" style="left:104.16px;top:185.15px;font-size:13.5px;color:#616161;font-weight:400;letter-spacing:-0.523px;font-family:'Liberation Sans';">README.md</div>
<div class="t" style="left:324.86px;top:45.95px;font-size:13.5px;color:#657B83;font-weight:400;letter-spacing:0.481px;font-family:'Liberation Sans';">.gitignore</div>
<div class="t" style="left:445.26px;top:45.95px;font-size:13.5px;color:#8A6519;font-weight:400;letter-spacing:0.178px;font-family:'Liberation Sans';">Makefile</div>
<div class="t" style="left:502.03px;top:46.98px;font-size:11.63px;color:#8A6519;font-weight:400;letter-spacing:0.643px;font-family:'Liberation Sans';">M</div>
<div class="t" style="left:573.46px;top:45.95px;font-size:13.5px;color:#8A6519;font-weight:400;letter-spacing:0.063px;font-family:'Liberation Sans';">main.c</div>
<div class="t" style="left:622.28px;top:46.98px;font-size:11.63px;color:#8A6519;font-weight:400;letter-spacing:0.493px;font-family:'Liberation Sans';">M</div>
<div class="t" style="left:331.16px;top:74.95px;font-size:13.5px;color:#858480;font-weight:400;letter-spacing:0.083px;font-family:'Liberation Sans';">main.c</div>
<div class="t" style="left:406.46px;top:74.95px;font-size:13.5px;color:#858480;font-weight:400;letter-spacing:0.205px;font-family:'Liberation Sans';">main(void)</div>
<div class="t" style="left:56.96px;top:781.55px;font-size:13.5px;color:#5E7379;font-weight:400;letter-spacing:-0.322px;font-family:'Liberation Sans';">hello_world</div>
<div class="t" style="left:145.46px;top:781.55px;font-size:13.5px;color:#5E7379;font-weight:400;letter-spacing:0.141px;font-family:'Liberation Sans';">main*</div>
<div class="t" style="left:261.46px;top:781.55px;font-size:13.5px;color:#5E7379;font-weight:400;letter-spacing:-0.584px;font-family:'Liberation Sans';">AnnsAnns/RIOT#5 needs reviewers</div>
<div class="t" style="left:491.46px;top:781.55px;font-size:13.5px;color:#5E7379;font-weight:400;letter-spacing:-0.436px;font-family:'Liberation Sans';">0</div>
<div class="t" style="left:518.46px;top:781.55px;font-size:13.5px;color:#5E7379;font-weight:400;letter-spacing:0.064px;font-family:'Liberation Sans';">0</div>
<div class="t" style="left:545.71px;top:781.55px;font-size:13.5px;color:#5E7379;font-weight:400;letter-spacing:-0.686px;font-family:'Liberation Sans';">3</div>
<div class="t" style="left:568.46px;top:781.55px;font-size:13.5px;color:#5E7379;font-weight:400;letter-spacing:-0.345px;font-family:'Liberation Sans';">Generating CTags failed: /bin/sh: line 1: ctags: command not found</div>
<div class="t" style="left:996.96px;top:781.55px;font-size:13.5px;color:#5E7379;font-weight:400;letter-spacing:-1.170px;font-family:'Liberation Sans';">C</div>
<div class="t" style="left:1048.46px;top:781.55px;font-size:13.5px;color:#5E7379;font-weight:400;letter-spacing:-0.050px;font-family:'Liberation Sans';">Linux</div>
<div class="t" style="left:1111.96px;top:781.55px;font-size:13.5px;color:#5E7379;font-weight:400;letter-spacing:-0.134px;font-family:'Liberation Sans';">Prettier</div>
</body>
</html>
